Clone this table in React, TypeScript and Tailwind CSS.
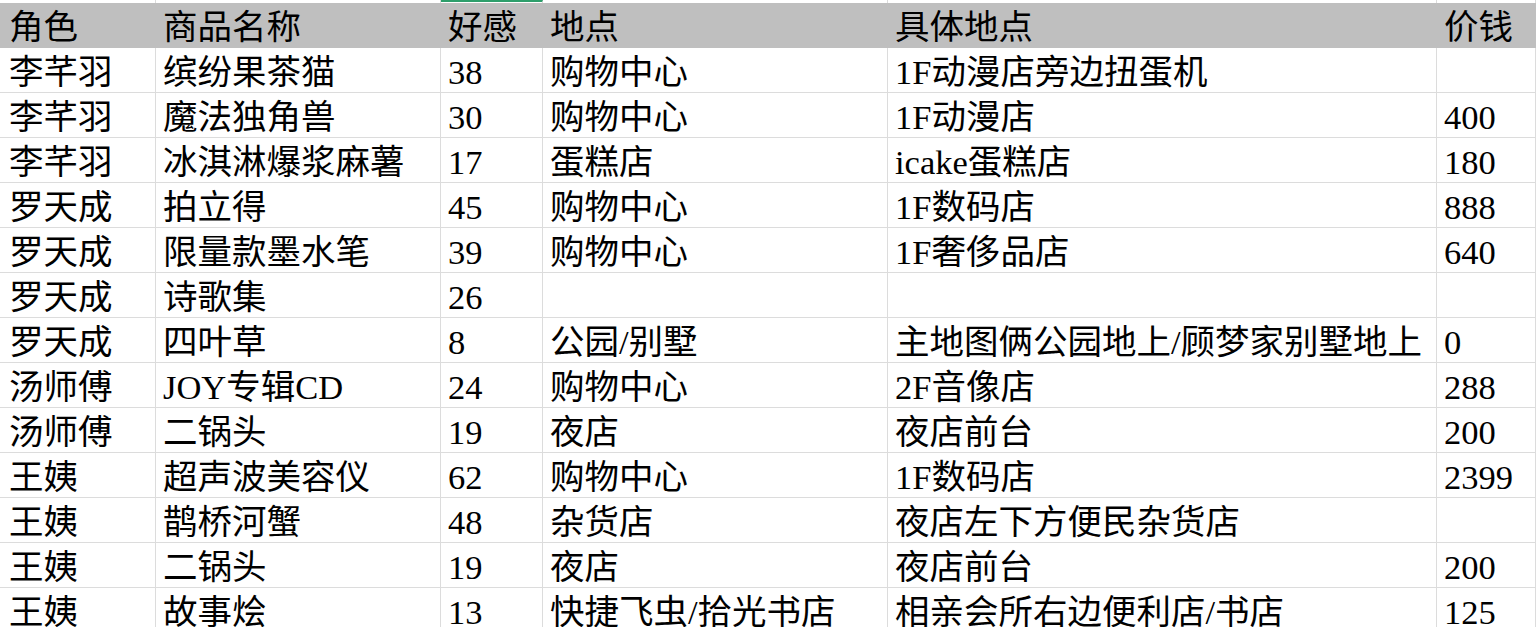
import type React from "react";

// --- Data ---
const headers = ["角色", "商品名称", "好感", "地点", "具体地点", "价钱"];

const rows: string[][] = [
  ["李芊羽", "缤纷果茶猫", "38", "购物中心", "1F动漫店旁边扭蛋机", ""],
  ["李芊羽", "魔法独角兽", "30", "购物中心", "1F动漫店", "400"],
  ["李芊羽", "冰淇淋爆浆麻薯", "17", "蛋糕店", "icake蛋糕店", "180"],
  ["罗天成", "拍立得", "45", "购物中心", "1F数码店", "888"],
  ["罗天成", "限量款墨水笔", "39", "购物中心", "1F奢侈品店", "640"],
  ["罗天成", "诗歌集", "26", "", "", ""],
  ["罗天成", "四叶草", "8", "公园/别墅", "主地图俩公园地上/顾梦家别墅地上", "0"],
  ["汤师傅", "JOY专辑CD", "24", "购物中心", "2F音像店", "288"],
  ["汤师傅", "二锅头", "19", "夜店", "夜店前台", "200"],
  ["王姨", "超声波美容仪", "62", "购物中心", "1F数码店", "2399"],
  ["王姨", "鹊桥河蟹", "48", "杂货店", "夜店左下方便民杂货店", ""],
  ["王姨", "二锅头", "19", "夜店", "夜店前台", "200"],
  ["王姨", "故事烩", "13", "快捷飞虫/拾光书店", "相亲会所右边便利店/书店", "125"],
];

const gridCols =
  "grid grid-cols-[156px_285px_102px_345px_549px_1fr]";

// --- Components ---
const Cell: React.FC<{ text: string; first?: boolean; header?: boolean }> = ({
  text,
  first,
  header,
}) => (
  <div
    className={`flex h-[45px] items-center whitespace-nowrap overflow-visible border-b border-r pt-[4px] leading-none ${
      header ? "border-[#bfbfbf] bg-[#bfbfbf]" : "border-[#dcdcdc] bg-white"
    } ${first ? "pl-[9px]" : "pl-[7px]"}`}
  >
    {text}
  </div>
);

export default function App() {
  return (
    <div
      className="h-[627px] w-[1536px] overflow-hidden bg-white text-[34.5px] text-black"
      style={{
        fontFamily:
          '"Liberation Serif", "Noto Sans CJK SC", serif',
      }}
    >
      {/* top sliver of the row above */}
      <div className={`${gridCols} h-[3px]`}>
        {headers.map((h, i) => (
          <div
            key={h}
            className={`border-r border-[#dcdcdc] ${
              i === 2 ? "border-t-2 border-t-[#2e9e6b]" : ""
            }`}
          />
        ))}
      </div>
      <div className={gridCols}>
        {headers.map((h, i) => (
          <Cell key={h} text={h} first={i === 0} header />
        ))}
      </div>
      {rows.map((r, ri) => (
        <div key={ri} className={gridCols}>
          {r.map((c, ci) => (
            <Cell key={ci} text={c} first={ci === 0} />
          ))}
        </div>
      ))}
    </div>
  );
}
